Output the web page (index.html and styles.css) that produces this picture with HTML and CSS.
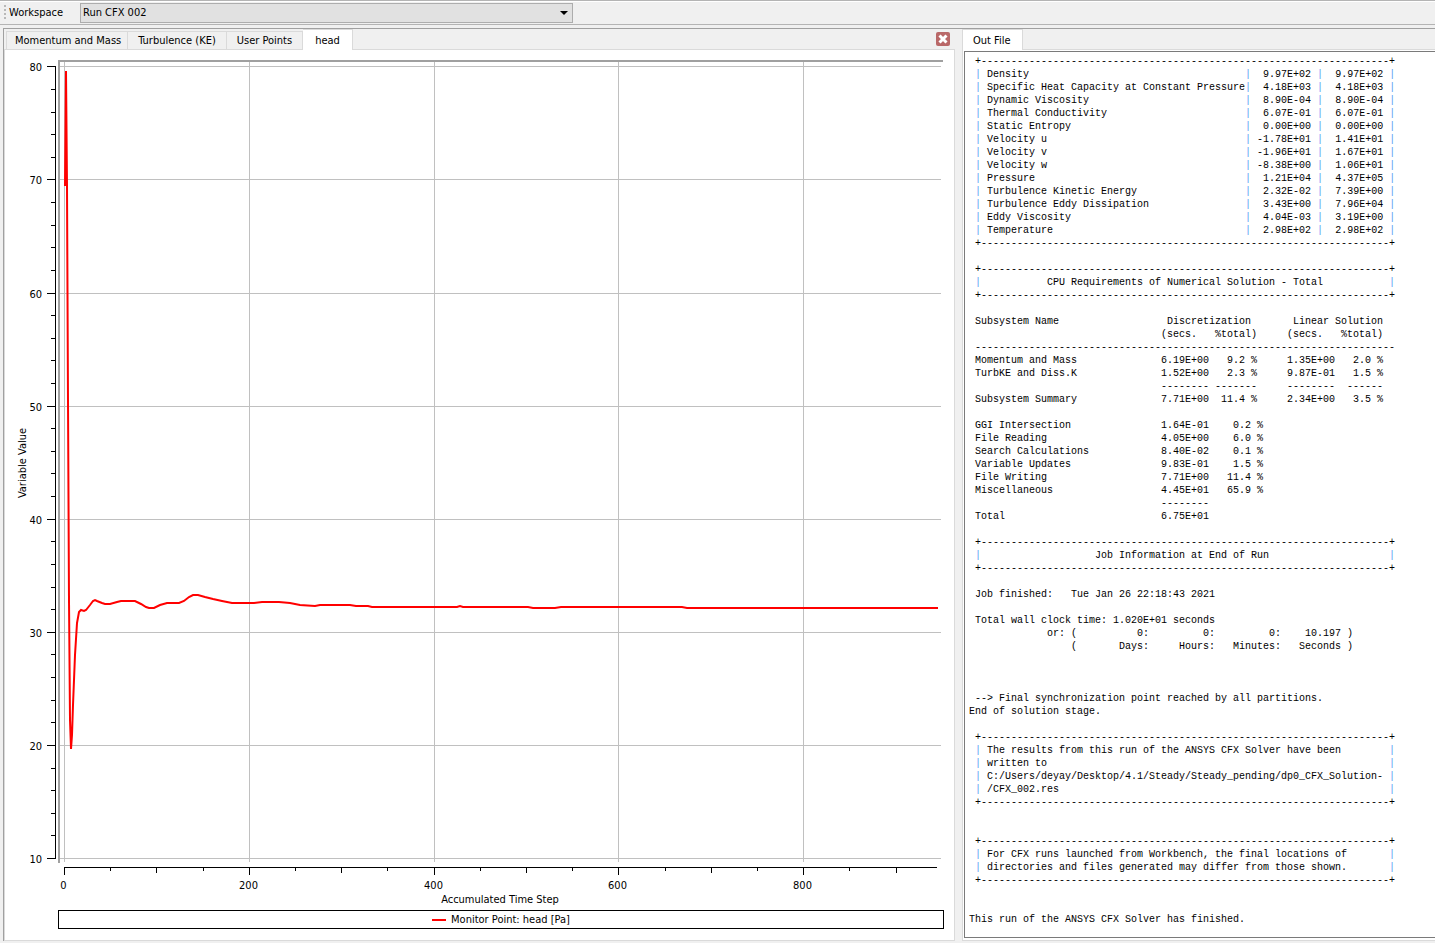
FILE: index.html
```html
<!DOCTYPE html>
<html lang="en">
<head>
    <meta charset="UTF-8">
    <meta name="viewport" content="width=device-width, initial-scale=1.0">
    <title>Solver Manager</title>
    <link rel="stylesheet" href="styles.css">
</head>
<body>

    <div class="toolbar">
        <span class="grip"></span>
        <label for="workspace">Workspace</label>
        <div class="select-box">
            <select id="workspace">
                <option>Run CFX 002</option>
            </select>
        </div>
    </div>

    <div class="main">
        <div class="panel plot-panel">
            <div class="tabs" role="tablist">
                <button class="tab" role="tab">Momentum and Mass</button>
                <button class="tab" role="tab">Turbulence (KE)</button>
                <button class="tab" role="tab">User Points</button>
                <button class="tab active" role="tab" aria-selected="true">head</button>
                <button class="close-btn" aria-label="Close">
                    <svg width="14" height="14" viewBox="0 0 14 14">
                        <rect width="14" height="14" rx="2" fill="#b96868"/>
                        <path d="M3.5 3.5l7 7M10.5 3.5l-7 7" stroke="#fff" stroke-width="3"/>
                    </svg>
                </button>
            </div>
            <div class="plot">
                <svg class="chart" viewBox="5 50 949 856">
                    <path class="frame" d="M59 863V61H943"/>
                    <g id="grid" class="grid"></g>
                    <g id="axes" class="axes"></g>
                    <g id="labels"></g>
                    <text class="title" x="500" y="903">Accumulated Time Step</text>
                    <text class="title" transform="translate(26 463) rotate(-90)">Variable Value</text>
                    <polyline class="curve" points="65,186 66,71 67,186 68,400 69,600 70,720 71,749 72,735 73,705 75,655 77,623 79,612 81,610 84,611 86,610 90,605 93,601 95,600 97,601 102,603 105,604 110,604 117,602 121,601 135,601 141,604 146,607 149,608 154,608 160,605 167,603 179,603 184,601 189,597 193,595 198,595 205,597 213,599 222,601 232,603 254,603 262,602 279,602 290,603 300,605 315,606 320,605 350,605 356,606 368,606 372,607 457,607 460,606 463,607 528,607 533,608 555,608 561,607 682,607 687,608 938,608"/>
                </svg>
                <div class="legend">
                    <span class="legend-line"></span>
                    Monitor Point: head [Pa]
                </div>
            </div>
        </div>

        <div class="panel out-panel">
            <div class="tabs" role="tablist">
                <button class="tab active" role="tab" aria-selected="true">Out File</button>
            </div>
            <div class="out-body">
<pre id="out-file">
 +--------------------------------------------------------------------+
 | Density                                    |  9.97E+02 |  9.97E+02 |
 | Specific Heat Capacity at Constant Pressure|  4.18E+03 |  4.18E+03 |
 | Dynamic Viscosity                          |  8.90E-04 |  8.90E-04 |
 | Thermal Conductivity                       |  6.07E-01 |  6.07E-01 |
 | Static Entropy                             |  0.00E+00 |  0.00E+00 |
 | Velocity u                                 | -1.78E+01 |  1.41E+01 |
 | Velocity v                                 | -1.96E+01 |  1.67E+01 |
 | Velocity w                                 | -8.38E+00 |  1.06E+01 |
 | Pressure                                   |  1.21E+04 |  4.37E+05 |
 | Turbulence Kinetic Energy                  |  2.32E-02 |  7.39E+00 |
 | Turbulence Eddy Dissipation                |  3.43E+00 |  7.96E+04 |
 | Eddy Viscosity                             |  4.04E-03 |  3.19E+00 |
 | Temperature                                |  2.98E+02 |  2.98E+02 |
 +--------------------------------------------------------------------+

 +--------------------------------------------------------------------+
 |           CPU Requirements of Numerical Solution - Total           |
 +--------------------------------------------------------------------+

 Subsystem Name                  Discretization       Linear Solution
                                (secs.   %total)     (secs.   %total)
 ----------------------------------------------------------------------
 Momentum and Mass              6.19E+00   9.2 %     1.35E+00   2.0 %
 TurbKE and Diss.K              1.52E+00   2.3 %     9.87E-01   1.5 %
                                -------- -------     --------  ------
 Subsystem Summary              7.71E+00  11.4 %     2.34E+00   3.5 %

 GGI Intersection               1.64E-01    0.2 %
 File Reading                   4.05E+00    6.0 %
 Search Calculations            8.40E-02    0.1 %
 Variable Updates               9.83E-01    1.5 %
 File Writing                   7.71E+00   11.4 %
 Miscellaneous                  4.45E+01   65.9 %
                                --------
 Total                          6.75E+01

 +--------------------------------------------------------------------+
 |                   Job Information at End of Run                    |
 +--------------------------------------------------------------------+

 Job finished:   Tue Jan 26 22:18:43 2021

 Total wall clock time: 1.020E+01 seconds
             or: (          0:         0:         0:    10.197 )
                 (       Days:     Hours:   Minutes:   Seconds )



 --> Final synchronization point reached by all partitions.
End of solution stage.

 +--------------------------------------------------------------------+
 | The results from this run of the ANSYS CFX Solver have been        |
 | written to                                                         |
 | C:/Users/deyay/Desktop/4.1/Steady/Steady_pending/dp0_CFX_Solution- |
 | /CFX_002.res                                                       |
 +--------------------------------------------------------------------+


 +--------------------------------------------------------------------+
 | For CFX runs launched from Workbench, the final locations of       |
 | directories and files generated may differ from those shown.       |
 +--------------------------------------------------------------------+


This run of the ANSYS CFX Solver has finished.
</pre>
            </div>
        </div>
    </div>

    <script>
        const grid = document.getElementById('grid');
        const axes = document.getElementById('axes');
        const labels = document.getElementById('labels');

        function addLine(parent, x1, y1, x2, y2) {
            const line = document.createElementNS('http://www.w3.org/2000/svg', 'path');
            line.setAttribute('d', `M${x1} ${y1}L${x2} ${y2}`);
            parent.appendChild(line);
        }

        function addLabel(text, x, y, className) {
            const label = document.createElementNS('http://www.w3.org/2000/svg', 'text');
            label.setAttribute('x', x);
            label.setAttribute('y', y);
            label.setAttribute('class', className);
            label.textContent = text;
            labels.appendChild(label);
        }

        // y axis, 10 to 80 with a minor tick every 2
        addLine(axes, 55.5, 66, 55.5, 859);
        for (let v = 10; v <= 80; v += 2) {
            const y = Math.round(858 - (v - 10) * 11.31) + 0.5;
            const major = v % 10 === 0;
            addLine(axes, major ? 47 : 51, y, 55, y);
            if (major) {
                addLine(grid, 60, y, 941, y);
                addLabel(v, 42, y + 4, 'y-label');
            }
        }

        // x axis, 0 to 900 with a tick every 50
        addLine(axes, 64, 867.5, 937, 867.5);
        for (let v = 0; v <= 900; v += 50) {
            const x = Math.round(64 + v * 0.924) + 0.5;
            const major = v % 200 === 0;
            addLine(axes, x, 867, x, major ? 875 : v % 100 === 0 ? 873 : 871);
            if (major) {
                addLine(grid, x, 62, x, 862);
                addLabel(v, x - 1, 889, 'x-label');
            }
        }

        // one block per line, table rules are drawn lighter than the text
        const out = document.getElementById('out-file');
        const lines = out.innerHTML.trimEnd().split('\n');
        out.innerHTML = lines.map(function (line) {
            return '<div class="line">' + line.replace(/\|/g, '<span class="rule">|</span>') + '</div>';
        }).join('');
    </script>

</body>
</html>
```
FILE: styles.css
```css
* {
    box-sizing: border-box;
}

body {
    margin: 0;
    min-height: 100vh;
    display: flex;
    flex-direction: column;
    background-color: #f0f0f0;
    color: #000;
    font-family: Tahoma, "DejaVu Sans Condensed", "DejaVu Sans", sans-serif;
    font-size: 11px;
}

button, select {
    font: inherit;
    color: inherit;
}

.toolbar {
    display: flex;
    align-items: center;
    height: 25px;
    padding-left: 4px;
    border-top: 1px solid #b4b4b4;
    border-bottom: 1px solid #b4b4b4;
    box-shadow: inset 0 1px #fff;
}

.grip {
    width: 2px;
    height: 16px;
    margin-right: 3px;
    background: repeating-linear-gradient(#b8b8b8 0 2px, transparent 2px 4px);
}

.toolbar label {
    width: 71px;
}

.select-box {
    position: relative;
    width: 493px;
}

.select-box select {
    display: block;
    width: 100%;
    height: 20px;
    padding: 0 2px;
    border: 1px solid #adadad;
    border-radius: 0;
    background-color: #e1e1e1;
    appearance: none;
}

.select-box::after {
    content: "";
    position: absolute;
    right: 5px;
    top: 8px;
    border: 4px solid transparent;
    border-top-color: #000;
    border-bottom: none;
}

.main {
    flex: 1;
    display: grid;
    grid-template-columns: minmax(0, 951fr) minmax(0, 473fr);
    gap: 7px;
    margin: 3px 0 2px 3px;
    border-top: 1px solid #a0a0a0;
    border-left: 1px solid #a0a0a0;
}

.panel {
    display: flex;
    flex-direction: column;
    min-width: 0;
}

.tabs {
    display: flex;
    align-items: flex-end;
    height: 21px;
    padding-left: 2px;
    box-shadow: inset 0 -1px #dadada;
}

.tab {
    height: 19px;
    padding: 0 10px;
    border: 1px solid #dadada;
    border-left: none;
    background-color: #f0f0f0;
    white-space: nowrap;
}

.tab:first-child {
    padding: 0 6px 0 8px;
    border-left: 1px solid #dadada;
}

.tab.active {
    height: 21px;
    padding: 0 12px;
    border-bottom: none;
    background-color: #fff;
}

.close-btn {
    margin: 0 5px 4px auto;
    padding: 0;
    border: none;
    background: none;
}

.close-btn svg {
    display: block;
}

.plot {
    flex: 1;
    padding-bottom: 11px;
    border: 1px solid #dadada;
    border-top: none;
    background-color: #fff;
}

.chart {
    display: block;
    width: 100%;
    margin-bottom: 4px;
}

.chart path {
    fill: none;
}

.frame {
    stroke: #a0a0a0;
    stroke-width: 2;
}

.grid {
    stroke: #c0c0c0;
}

.axes {
    stroke: #000;
}

.curve {
    fill: none;
    stroke: #f00;
    stroke-width: 2;
}

.y-label {
    text-anchor: end;
}

.x-label, .title {
    text-anchor: middle;
}

.legend {
    display: flex;
    align-items: center;
    justify-content: center;
    gap: 5px;
    height: 19px;
    margin: 0 10px 0 53px;
    border: 1px solid #000;
}

.legend-line {
    width: 14px;
    height: 2px;
    background-color: #f00;
}

.out-panel .tabs {
    padding-left: 0;
}

.out-panel .tab {
    padding: 0 11px 0 10px;
}

.out-body {
    flex: 1;
    display: flex;
    padding: 1px 0 2px 1px;
    border-left: 1px solid #dadada;
    border-bottom: 1px solid #dadada;
    background-color: #fff;
}

#out-file {
    flex: 1;
    margin: 0;
    padding: 3px 4px;
    border: 1px solid #7a7a7a;
    border-right: none;
    overflow: hidden;
    font-family: "Liberation Mono", monospace;
    font-size: 10px;
    line-height: 13px;
}

.line {
    min-height: 13px;
}

.rule {
    color: #5c9cf5;
}
```
